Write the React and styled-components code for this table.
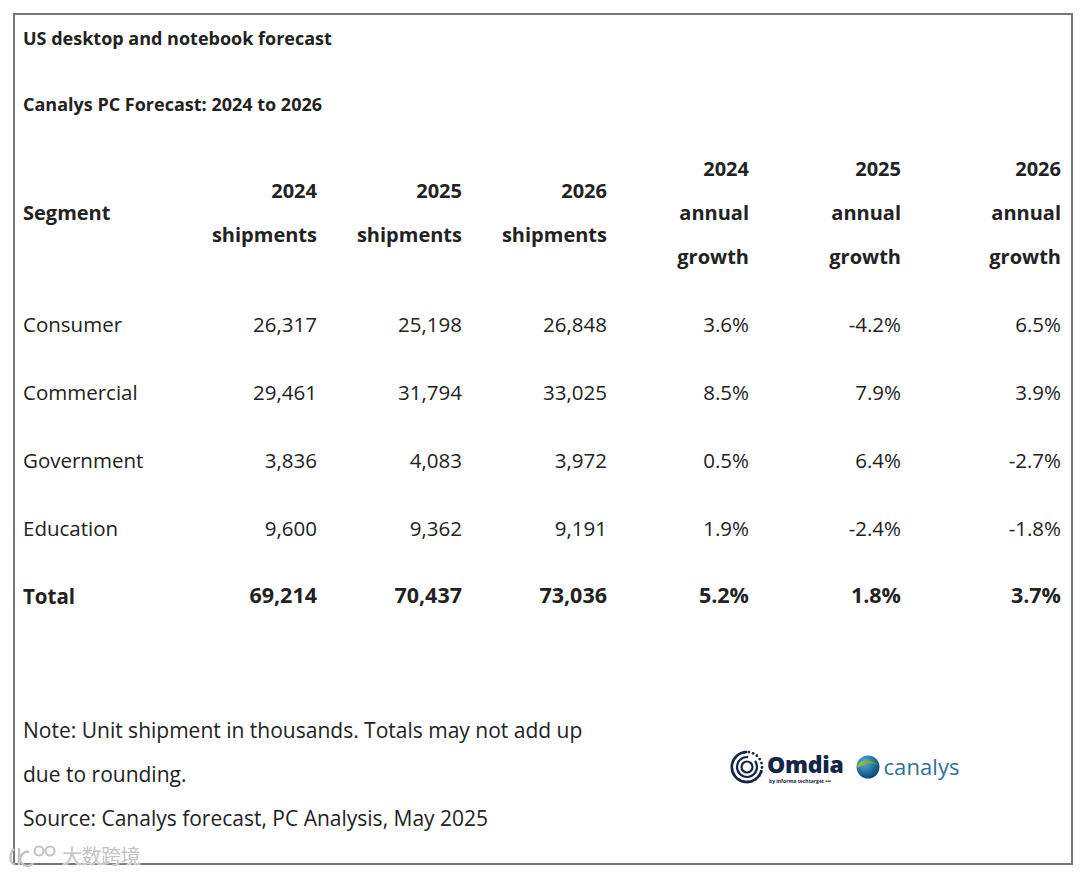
import React from "react";
import styled, { createGlobalStyle } from "styled-components";

const Global = createGlobalStyle`
  html, body { margin: 0; padding: 0; background: #fff; }
  body { font-family: "Open Sans", "Noto Sans", sans-serif; color: #222; }
`;

const Page = styled.div`
  position: relative;
  width: 1080px;
  height: 878px;
  padding: 13px 0 0 13px;
  box-sizing: border-box;
`;

const Frame = styled.div`
  width: 1060px;
  height: 852px;
  box-sizing: border-box;
  border: 2px solid #777;
  padding: 1px 9px 0 8px;
  display: flex;
  flex-direction: column;
`;

const Title = styled.div`
  font-weight: 700;
  font-size: 18px;
  line-height: 44px;
  margin-top: ${(p) => p.$mt || 0}px;
`;

const Grid = styled.div`
  display: grid;
  grid-template-columns: 167px 127px 145px 145px 142px 152px 160px;
  margin-top: 21px;
`;

const HeadCell = styled.div`
  height: 132px;
  display: flex;
  flex-direction: column;
  justify-content: center;
  align-items: ${(p) => (p.$left ? "flex-start" : "flex-end")};
  font-weight: 700;
  font-size: 20px;
  line-height: 44px;
  margin-bottom: 11px;
`;

const Cell = styled.div`
  height: 68px;
  box-sizing: border-box;
  display: flex;
  align-items: center;
  justify-content: ${(p) => (p.$left ? "flex-start" : "flex-end")};
  font-size: ${(p) => (p.$bold && !p.$left ? "21.5px" : "20.5px")};
  font-weight: ${(p) => (p.$bold ? 700 : 400)};
  padding-bottom: ${(p) => (p.$bold && !p.$left ? "3px" : p.$bold ? "1px" : "0")};
`;

const Footer = styled.div`
  display: flex;
  align-items: center;
  margin-top: 78px;
`;

const Notes = styled.div`
  width: 600px;
  font-size: 21px;
  line-height: 44px;
`;

const Logos = styled.div`
  display: flex;
  align-items: center;
  margin-left: 107px;
  margin-top: -14px;
`;

const OmdiaWrap = styled.div`
  display: flex;
  align-items: center;
  gap: 3px;
`;

const OmdiaText = styled.div`
  display: flex;
  flex-direction: column;
  color: #14254a;
`;

const OmdiaWord = styled.span`
  font-family: "Open Sans", sans-serif;
  font-weight: 800;
  font-size: 23px;
  line-height: 27px;
  letter-spacing: -0.3px;
`;

const OmdiaBy = styled.span`
  font-family: "Open Sans", sans-serif;
  font-weight: 700;
  font-size: 5px;
  line-height: 6px;
  margin: 0 0 0 2px;
  white-space: nowrap;
`;

const CanalysWrap = styled.div`
  display: flex;
  align-items: center;
  gap: 3px;
  margin-left: 13px;
`;

const CanalysWord = styled.span`
  font-family: "Open Sans", sans-serif;
  font-size: 22px;
  line-height: 24px;
  color: #2f6f9a;
  letter-spacing: 0.1px;
  margin-top: -3px;
`;

const Watermark = styled.div`
  position: absolute;
  left: 8px;
  top: 841px;
  display: flex;
  align-items: center;
  gap: 4px;
  color: #c4c4c4;
  font-family: "Noto Sans CJK SC", sans-serif;
  font-size: 20px;
  letter-spacing: -0.5px;
  text-shadow: 0 0 2px #fff, 0 0 2px #fff, 0 0 1px #fff;
`;

const header = [
  ["2024", "shipments"],
  ["2025", "shipments"],
  ["2026", "shipments"],
  ["2024", "annual", "growth"],
  ["2025", "annual", "growth"],
  ["2026", "annual", "growth"],
];

const rows = [
  ["Consumer", "26,317", "25,198", "26,848", "3.6%", "-4.2%", "6.5%"],
  ["Commercial", "29,461", "31,794", "33,025", "8.5%", "7.9%", "3.9%"],
  ["Government", "3,836", "4,083", "3,972", "0.5%", "6.4%", "-2.7%"],
  ["Education", "9,600", "9,362", "9,191", "1.9%", "-2.4%", "-1.8%"],
  ["Total", "69,214", "70,437", "73,036", "5.2%", "1.8%", "3.7%"],
];

function OmdiaIcon() {
  const dots = [];
  for (let i = 0; i < 14; i++) {
    const a = (-100 + i * 17) * (Math.PI / 180);
    dots.push(
      <circle key={i} cx={17 + 15 * Math.cos(a)} cy={17 + 15 * Math.sin(a)} r="1.4" fill="#14254a" />
    );
  }
  return (
    <svg width="34" height="34" viewBox="0 0 34 34">
      <path d="M17 2 A15 15 0 1 0 31.5 20" fill="none" stroke="#14254a" strokeWidth="2.6" />
      {dots}
      <circle cx="17" cy="17" r="10" fill="none" stroke="#14254a" strokeWidth="2.2" strokeDasharray="48 8" />
      <circle cx="17" cy="17" r="5.5" fill="none" stroke="#14254a" strokeWidth="2.2" />
    </svg>
  );
}

function Globe() {
  return (
    <svg width="24" height="24" viewBox="0 0 24 24">
      <defs>
        <radialGradient id="g1" cx="0.35" cy="0.3" r="0.8">
          <stop offset="0" stopColor="#5fb0d8" />
          <stop offset="0.6" stopColor="#1f6a99" />
          <stop offset="1" stopColor="#0d3d66" />
        </radialGradient>
        <linearGradient id="g2" x1="0" y1="0" x2="1" y2="0">
          <stop offset="0" stopColor="#9cc83c" />
          <stop offset="1" stopColor="#3e9a3c" />
        </linearGradient>
      </defs>
      <circle cx="12" cy="12" r="11.5" fill="url(#g1)" />
      <path d="M1.5 10 C6 4, 15 4, 22 10 C16 8, 8 8, 1.5 13 Z" fill="url(#g2)" />
    </svg>
  );
}

export default function App() {
  return (
    <>
      <Global />
      <Page>
        <Frame>
          <Title>US desktop and notebook forecast</Title>
          <Title $mt={22}>Canalys PC Forecast: 2024 to 2026</Title>
          <Grid>
            <HeadCell $left>Segment</HeadCell>
            {header.map((h, i) => (
              <HeadCell key={i}>
                {h.map((t) => (
                  <span key={t}>{t}</span>
                ))}
              </HeadCell>
            ))}
            {rows.map((r, ri) =>
              r.map((v, ci) => (
                <Cell key={ri + "-" + ci} $left={ci === 0} $bold={ri === rows.length - 1}>
                  {v}
                </Cell>
              ))
            )}
          </Grid>
          <Footer>
            <Notes>
              Note: Unit shipment in thousands. Totals may not add up
              <br />
              due to rounding.
              <br />
              Source: Canalys forecast, PC Analysis, May 2025
            </Notes>
            <Logos>
              <OmdiaWrap>
                <OmdiaIcon />
                <OmdiaText>
                  <OmdiaWord>Omdia</OmdiaWord>
                  <OmdiaBy>by informa techtarget •••</OmdiaBy>
                </OmdiaText>
              </OmdiaWrap>
              <CanalysWrap>
                <Globe />
                <CanalysWord>canalys</CanalysWord>
              </CanalysWrap>
            </Logos>
          </Footer>
        </Frame>
        <Watermark>
          <svg width="50" height="26" viewBox="0 0 50 26">
            <path d="M6 6 C1 11, 1 19, 7 22 M11 5 V22 M21 9 A7 7 0 1 0 25 20" fill="none" stroke="#c4c4c4" strokeWidth="2.4" />
            <circle cx="31" cy="8" r="4.5" fill="none" stroke="#c4c4c4" strokeWidth="2.2" />
            <circle cx="42" cy="8" r="4.5" fill="none" stroke="#c4c4c4" strokeWidth="2.2" />
          </svg>
          <span>大数跨境</span>
        </Watermark>
      </Page>
    </>
  );
}
